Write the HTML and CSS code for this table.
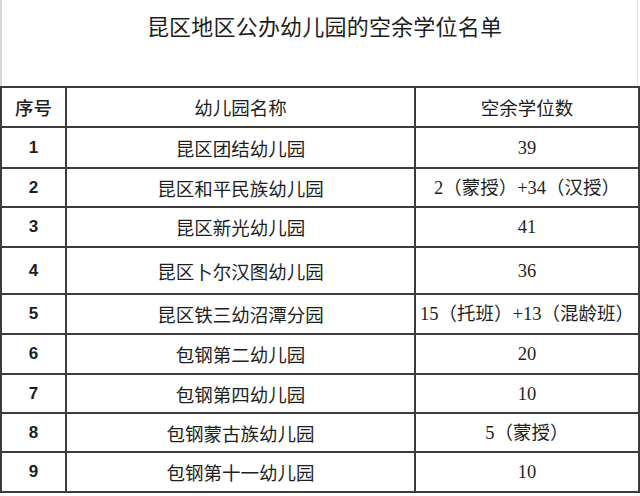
FILE: index.html
```html
<!DOCTYPE html>
<html lang="zh-CN">
<head>
<meta charset="utf-8">
<title>昆区地区公办幼儿园的空余学位名单</title>
<link rel="stylesheet" href="styles.css">
</head>
<body>
<div class="page">
  <div class="title-area">
    <h1 class="title">昆区地区公办幼儿园的空余学位名单</h1>
  </div>
  <table class="list">
    <colgroup>
      <col class="c-no">
      <col class="c-name">
      <col class="c-seats">
    </colgroup>
    <thead>
      <tr class="r-head">
        <th class="no">序号</th>
        <th class="name">幼儿园名称</th>
        <th class="seats">空余学位数</th>
      </tr>
    </thead>
    <tbody>
      <tr class="r1"><td class="no">1</td><td class="name">昆区团结幼儿园</td><td class="seats">39</td></tr>
      <tr class="r2"><td class="no">2</td><td class="name">昆区和平民族幼儿园</td><td class="seats">2（蒙授）+34（汉授）</td></tr>
      <tr class="r3"><td class="no">3</td><td class="name">昆区新光幼儿园</td><td class="seats">41</td></tr>
      <tr class="r4"><td class="no">4</td><td class="name">昆区卜尔汉图幼儿园</td><td class="seats">36</td></tr>
      <tr class="r5"><td class="no">5</td><td class="name">昆区铁三幼沼潭分园</td><td class="seats">15（托班）+13（混龄班）</td></tr>
      <tr class="r6"><td class="no">6</td><td class="name">包钢第二幼儿园</td><td class="seats">20</td></tr>
      <tr class="r7"><td class="no">7</td><td class="name">包钢第四幼儿园</td><td class="seats">10</td></tr>
      <tr class="r8"><td class="no">8</td><td class="name">包钢蒙古族幼儿园</td><td class="seats">5（蒙授）</td></tr>
      <tr class="r9"><td class="no">9</td><td class="name">包钢第十一幼儿园</td><td class="seats">10</td></tr>
    </tbody>
  </table>
</div>
</body>
</html>
```
FILE: styles.css
```css
html, body {
  margin: 0;
  padding: 0;
  background: #ffffff;
}

.page {
  width: 640px;
  height: 496px;
  overflow: hidden;
  color: #1e1e1e;
  font-family: "Noto Sans CJK SC", "Noto Sans", sans-serif;
}

.title-area {
  box-sizing: border-box;
  height: 86px;
  width: 638px;
  border-left: 2px solid #d8d8d8;
  border-right: 1px solid #e2e2e2;
  padding: 12px 0 0 10px;
}

.title {
  margin: 0;
  font-size: 22px;
  line-height: 26px;
  font-weight: 400;
  text-align: center;
  letter-spacing: 0.2px;
}

.list {
  width: 638px;
  border-collapse: collapse;
  table-layout: fixed;
}

.c-no { width: 65px; }
.c-name { width: 349px; }
.c-seats { width: 224px; }

.list th,
.list td {
  border: 2px solid #3c3c3c;
  padding: 0;
  text-align: center;
  vertical-align: middle;
  font-size: 18.5px;
  line-height: 22px;
  white-space: nowrap;
}

.list th {
  font-weight: 400;
}

.list th.no {
  font-weight: 500;
}

.list td.no {
  font-family: "Liberation Sans", "Noto Sans", sans-serif;
  font-weight: 700;
  font-size: 17px;
}

.list td.seats {
  font-family: "Liberation Serif", "Noto Sans CJK SC", serif;
  font-size: 18.5px;
}

.r-head { height: 40px; }
.r1 { height: 41px; }
.r2 { height: 39px; }
.r3 { height: 40px; }
.r4 { height: 47px; }
.r5 { height: 40px; }
.r6 { height: 40px; }
.r7 { height: 39px; }
.r8 { height: 39px; }
.r9 { height: 40px; }

.r6 td,
.r8 td {
  border-top-color: #5a5a5a;
}
```
